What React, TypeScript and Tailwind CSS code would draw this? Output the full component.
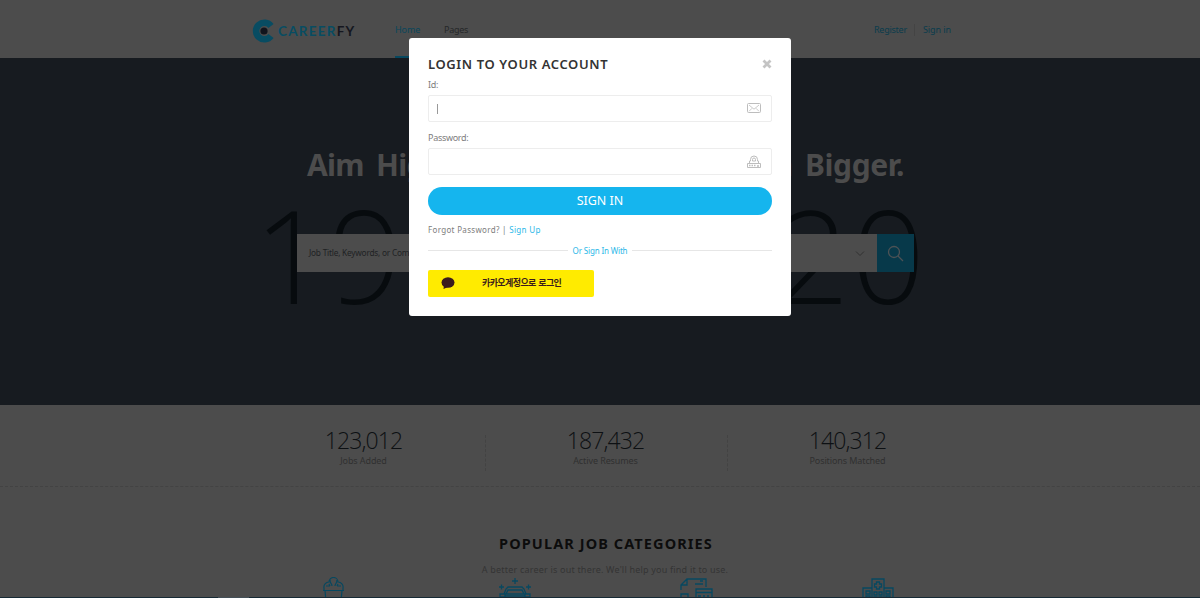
import React from "react";

const stats = [
  { value: "123,012", label: "Jobs Added" },
  { value: "187,432", label: "Active Resumes" },
  { value: "140,312", label: "Positions Matched" },
];

function Logo() {
  return (
    <div className="flex h-[24px] w-[104px] items-center">
      <svg width="22" height="24" viewBox="0 0 22 24" fill="none" className="shrink-0">
        <path d="M19 7A8.300 8.300 0 1 0 19 17" stroke="#084c62" strokeWidth="6.500" />
        <circle cx="12" cy="12" r="3.600" fill="#11141d" />
      </svg>
      <span className="ml-[4px] whitespace-nowrap font-[Lato] text-[13.500px] font-bold leading-[24px] tracking-[1.250px] text-[#084c62]">
        CAREER<span className="text-[#15171f]">FY</span>
      </span>
    </div>
  );
}

function Header() {
  return (
    <header className="flex h-[58px] items-stretch bg-[#4c4c4c] pl-[252px] text-[9px]">
      <div className="flex items-center pt-[3px]">
        <Logo />
      </div>
      <nav className="ml-[39px] flex">
        <a className="w-[25px] whitespace-nowrap border-b-2 border-[#07485f] pt-[20px] leading-[20px] tracking-[-0.1px] text-[#0a465b]">
          Home
        </a>
        <a className="ml-[24px] pt-[20px] leading-[20px] tracking-[-0.25px] text-[#262829]">Pages</a>
      </nav>
      <div className="ml-auto mr-[248px] flex h-[58px] pt-[20px] leading-[20px] text-[#0a3c4c]">
        <a className="w-[40px] tracking-[-0.25px]">Register</a>
        <span className="mt-[4px] h-[12px] w-px bg-[#444444]" />
        <a className="ml-[8px] w-[29px] whitespace-nowrap tracking-[-0.1px]">Sign in</a>
      </div>
    </header>
  );
}

function Hero() {
  return (
    <section className="h-[347px] bg-[#171b20]">
      <h1 className="whitespace-nowrap pl-[307px] pt-[87px] text-[30px] font-bold leading-[40px] text-[#4c4c4c]">
        <span className="flex w-[597px] justify-between">
          <span className="tracking-[-0.7px] [word-spacing:5px]">Aim Higher.</span>
          <span className="tracking-[-0.4px] [word-spacing:5px]">Dream Bigger.</span>
        </span>
      </h1>
      <div className="grid pt-[16px]">
        <div className="col-start-1 row-start-1 ml-[254px] flex h-[120px] w-[673px] justify-between font-['Open_Sans'] text-[129px] font-light leading-[106px] text-[#070b0e]">
          <span className="tracking-[1px]">19</span>
          <span className="tracking-[2px]">20</span>
        </div>
        <div className="col-start-1 row-start-1 ml-[297px] mt-[33px] flex h-[38px] w-[617px] bg-[#4c4c4c]">
          <span className="flex-1 pl-[12px] text-[8.300px] leading-[38px] tracking-[-0.220px] text-[#202224]">
            Job Title, Keywords, or Company
          </span>
          <svg width="10" height="38" viewBox="0 0 10 38" fill="none" className="mr-[12px]">
            <path d="M1 17.500 5 21.500l4-4" stroke="#303030" />
          </svg>
          <span className="flex w-[37px] items-center justify-center bg-[#07394a]">
            <svg width="17" height="17" viewBox="0 0 17 17" fill="none" stroke="#4c5255" strokeWidth="1.300">
              <circle cx="7" cy="7" r="5.500" />
              <path d="m11 11 5 5" />
            </svg>
          </span>
        </div>
      </div>
    </section>
  );
}

function Stats() {
  return (
    <section className="flex h-[82px] border-b border-dashed border-[#434343] bg-[#4c4c4c] pl-[243px] pt-[21px]">
      {stats.map((s, i) => (
        <React.Fragment key={s.label}>
          {i > 0 && <span className="mt-[9px] h-[36px] w-px translate-x-px border-l border-dashed border-[#434343]" />}
          <div className="w-[241px] text-center">
            <div className="font-['Open_Sans'] text-[23px] font-light leading-[28px] tracking-[-0.900px] text-[#0d1013]">
              {s.value}
            </div>
            <div className="text-[9px] leading-[13px] tracking-[-0.100px] text-[#303030]">{s.label}</div>
          </div>
        </React.Fragment>
      ))}
    </section>
  );
}

function Categories() {
  return (
    <section className="flex h-[111px] flex-col bg-[#4c4c4c] pt-[45px]">
      <h2 className="pl-[12px] text-center text-[14.500px] font-bold leading-[22px] tracking-[1.100px] text-[#0c0c0c]">
        POPULAR JOB CATEGORIES
      </h2>
      <p className="mt-[9px] pl-[10px] text-center text-[9px] leading-[13px] tracking-[0.200px] text-[#343434]">
        A better career is out there. We'll help you find it to use.
      </p>
      <div className="mt-px flex flex-1 items-start overflow-hidden pl-[322px]">
        <svg width="24" height="24" viewBox="0 0 24 24" fill="none" stroke="#074860" strokeWidth="1.200">
          <path d="M1 13.500h21M2 13v-2a5 5 0 0 1 5-6 4.500 4.500 0 0 1 9 0 5 5 0 0 1 5 6v2M3 13.500l1 11M20 13.500l-1 11" />
          <path d="M8 3c0 4 2 3 2 6M15 3c0 4-2 3-2 6M4 9h4M15 9h4M7 7l1 2M16 7l-1 2" />
        </svg>
        <svg width="34" height="24" viewBox="0 0 34 24" fill="none" stroke="#074860" strokeWidth="1.300" className="ml-[152px]">
          <path d="M17 1v6M14 4h6M3.500 7.500v5M1 10h5M30.500 7.500v5M28 10h5M6 17l2-5 2-2h14l2 2 2 5M8 17l2-4h14l2 4M2 17h5v3H2zM27 17h5v3h-5zM7 17h20v2H7z" />
        </svg>
        <svg width="34" height="24" viewBox="0 0 34 24" fill="none" stroke="#074860" strokeWidth="1.300" className="ml-[147px]">
          <path d="M2 13V8l6-6h19v8M2 8h6V2M21 4h3M16 7h8M2 24v-7h7v7M17 24V12h16v12M17 15.500h16M19 19h3m2 0h2m2 0h2" />
        </svg>
        <svg width="34" height="24" viewBox="0 0 34 24" fill="none" stroke="#074860" strokeWidth="1.300" className="ml-[148px]">
          <path d="M11 24V2h12v22M2 24V11h9M23 11h9v13M15.500 5h3v2h2v3h-2v2h-3v-2h-2V7h2zM5 14h4v3H5zM5 19h4v3H5zM25 14h4v3h-4zM25 19h4v3h-4zM13 15h3v3h-3zM18 15h3v3h-3zM13 20h3v3h-3zM18 20h3v3h-3z" />
        </svg>
      </div>
      <div className="flex h-px bg-[#172a35]">
        <span className="ml-[218px] w-[31px] bg-[#445058]" />
      </div>
    </section>
  );
}

function Field({ label, children, caret }: { label: string; children: React.ReactNode; caret?: boolean }) {
  return (
    <label className="block">
      <span className="block h-[16px] text-[9px] leading-[12px] tracking-[-0.300px] text-[#7d7d7d]">{label}</span>
      <span className="flex h-[27px] items-center rounded-[2px] border border-[#ededed] px-[8px]">
        {caret && <span className="h-[10px] w-px bg-[#999]" />}
        <span className="ml-auto mr-px">{children}</span>
      </span>
    </label>
  );
}

function LoginDialog() {
  return (
    <div
      role="dialog"
      className="absolute left-[409px] top-[38px] h-[278px] w-[382px] rounded-[3px] bg-white px-[19px] pt-[16px]"
    >
      <div className="flex h-[24px] items-start justify-between">
        <h2 className="whitespace-nowrap text-[13px] font-semibold leading-[21px] tracking-[0.620px] text-[#333]">
          LOGIN TO YOUR ACCOUNT
        </h2>
        <svg width="10" height="10" viewBox="0 0 10 10" className="mt-[5px]">
          <path d="m1.500 1.500 7 7m0-7-7 7" stroke="#c4c4c4" strokeWidth="2.800" />
        </svg>
      </div>
      <div className="pt-px">
        <Field label="Id:" caret>
          <svg width="16" height="12" viewBox="0 0 16 12" fill="none" stroke="#bdbdbd" className="-translate-y-px">
            <rect x="1.500" y="1.500" width="13" height="9" rx="1" />
            <path d="m3 3 5 4.200L13 3M3 9.300l3-3M13 9.300l-3-3" strokeWidth=".8" />
          </svg>
        </Field>
      </div>
      <div className="pt-[10px]">
        <Field label="Password:">
          <svg width="16" height="14" viewBox="0 0 16 14" fill="none" stroke="#bdbdbd">
            <path d="M3.500 8.500V6h1V4.500a3.500 3.500 0 0 1 7 0V6h1v2.500M6.500 6V4.500a1.500 1.500 0 0 1 3 0V6z" />
            <path d="M1.500 8.500h13v4h-13z" />
            <path d="M3 10.500h1.500m1 0H7m1 0h1.500m1.500 .500h2" strokeWidth="1.300" />
          </svg>
        </Field>
      </div>
      <button className="mt-[12px] block h-[28px] w-full rounded-full bg-[#15b5ee] text-[12.500px] leading-[28px] text-white">
        SIGN IN
      </button>
      <div className="mt-[7px] h-[16px] whitespace-nowrap text-[8px] leading-[16px] tracking-[0.320px] text-[#7d7d7d]">
        Forgot Password? | <a className="text-[#2cb8e8]">Sign Up</a>
      </div>
      <div className="mt-[6px] flex h-[14px] items-center">
        <span className="h-px flex-1 -translate-y-px bg-[#e6e6e6]" />
        <span className="w-[64px] whitespace-nowrap text-center text-[8px] leading-[14px] tracking-[-0.150px] text-[#2cb8e8]">
          Or Sign In With
        </span>
        <span className="h-px flex-1 -translate-y-px bg-[#e6e6e6]" />
      </div>
      <button className="mt-[12px] flex h-[27px] w-[166px] items-center rounded-[2px] bg-[#ffeb00] pl-[13px]">
        <svg width="14" height="14" viewBox="0 0 14 14" fill="#3b1c1c" className="-translate-y-px">
          <ellipse cx="7" cy="6.500" rx="6.500" ry="5.300" />
          <path d="M3 9 2.500 13 7 11z" />
        </svg>
        <span className="ml-[27px] -translate-y-px whitespace-nowrap font-['Noto_Sans_CJK_KR',sans-serif] text-[9px] font-bold tracking-[-0.600px] text-[#3b1c1c] [word-spacing:1px]">
          카카오계정으로 로그인
        </span>
      </button>
    </div>
  );
}

export default function App() {
  return (
    <div className="relative h-[598px] w-[1200px] overflow-hidden font-['Noto_Sans','Noto_Sans_CJK_KR',sans-serif]">
      <Header />
      <Hero />
      <Stats />
      <Categories />
      <LoginDialog />
    </div>
  );
}
